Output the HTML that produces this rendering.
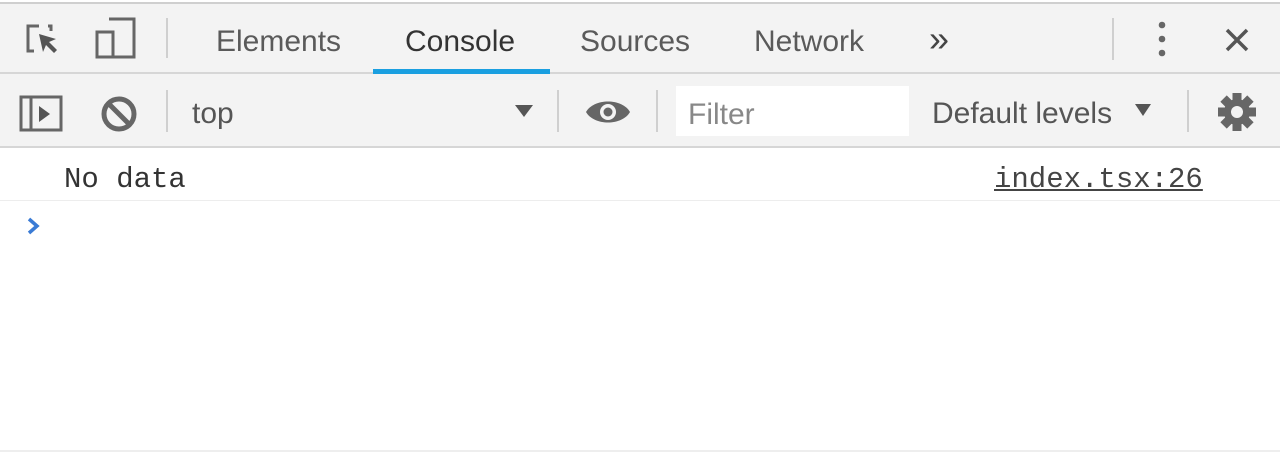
<!DOCTYPE html>
<html><head><style>
body{margin:0;width:1280px;height:452px;background:#fff;position:relative;overflow:hidden;font-family:"Liberation Sans",sans-serif;}
.a{position:absolute;white-space:nowrap;}
.bar1{position:absolute;left:0;top:2px;width:1280px;height:72px;background:#f3f3f3;border-top:2px solid #cfcfcf;border-bottom:2px solid #d6d6d6;box-sizing:border-box;}
.bar2{position:absolute;left:0;top:74px;width:1280px;height:74px;background:#f3f3f3;border-bottom:2px solid #d6d6d6;box-sizing:border-box;}
.tab{font-size:30px;color:#5a5a5a;top:25px;}
.sep{position:absolute;width:2px;background:#cfcfcf;}
.mono{font-family:"Liberation Mono",monospace;font-size:29px;color:#333;}
</style></head><body>
<div class="bar1"></div>
<div class="bar2"></div>
<svg class="a" style="left:24px;top:22px" width="40" height="36" viewBox="0 0 40 36"><path d="M15 4H4v25h6" fill="none" stroke="#666" stroke-width="3"/><path d="M24 4h3v5" fill="none" stroke="#666" stroke-width="3"/><path d="M15 12l17 5-7 3 8 8-3 3-8-8-3 7z" fill="#555"/></svg>
<svg class="a" style="left:93px;top:16px" width="46" height="44" viewBox="0 0 46 44"><path d="M16 3h25v38H16" fill="none" stroke="#666" stroke-width="3"/><rect x="4" y="16" width="16" height="25" fill="none" stroke="#666" stroke-width="3"/></svg>
<div class="sep" style="left:166px;top:18px;height:40px"></div>
<div class="a tab" style="left:216px">Elements</div>
<div class="a tab" style="left:405px;color:#333">Console</div>
<div class="a" style="left:373px;top:69px;width:177px;height:5px;background:#1a9fe0"></div>
<div class="a tab" style="left:580px">Sources</div>
<div class="a tab" style="left:754px">Network</div>
<div class="a" style="left:929px;top:18px;font-size:36px;color:#444">»</div>
<div class="sep" style="left:1112px;top:18px;height:42px"></div>
<svg class="a" style="left:1155px;top:20px" width="14" height="38"><circle cx="7" cy="5" r="3.3" fill="#666"/><circle cx="7" cy="19" r="3.3" fill="#666"/><circle cx="7" cy="33" r="3.3" fill="#666"/></svg>
<svg class="a" style="left:1224px;top:27px" width="26" height="26"><path d="M3 3L23 23M23 3L3 23" stroke="#555" stroke-width="3.5"/></svg>
<svg class="a" style="left:18px;top:94px" width="46" height="40"><rect x="3" y="3" width="40" height="33" fill="none" stroke="#666" stroke-width="3"/><path d="M13 3v33" stroke="#666" stroke-width="3"/><path d="M21 12l11 8-11 8z" fill="#555"/></svg>
<svg class="a" style="left:99px;top:94px" width="40" height="40"><circle cx="20" cy="20" r="15" fill="none" stroke="#666" stroke-width="5"/><path d="M10 10L30 30" stroke="#666" stroke-width="5"/></svg>
<div class="sep" style="left:166px;top:90px;height:42px"></div>
<div class="a" style="left:192px;top:97px;font-size:30px;color:#555">top</div>
<svg class="a" style="left:514px;top:104px" width="20" height="14"><path d="M1 1h18L10 13z" fill="#555"/></svg>
<div class="sep" style="left:557px;top:90px;height:42px"></div>
<svg class="a" style="left:584px;top:96px" width="48" height="32" viewBox="0 0 48 32"><path d="M2 16C10 2 38 2 46 16C38 30 10 30 2 16z" fill="#666"/><circle cx="24" cy="16" r="8" fill="#f3f3f3"/><circle cx="24" cy="16" r="4.5" fill="#666"/></svg>
<div class="sep" style="left:656px;top:90px;height:42px"></div>
<div class="a" style="left:676px;top:86px;width:233px;height:50px;background:#fff"></div>
<div class="a" style="left:688px;top:98px;font-size:30px;color:#888">Filter</div>
<div class="a" style="left:932px;top:97px;font-size:30px;color:#555">Default levels</div>
<svg class="a" style="left:1134px;top:103px" width="18" height="14"><path d="M1 1h16L9 13z" fill="#555"/></svg>
<div class="sep" style="left:1187px;top:90px;height:42px"></div>
<svg class="a" style="left:1217px;top:92px" width="40" height="40" viewBox="-20 -20 40 40"><g fill="#666"><circle r="13"/><g id="t"><rect x="-4.5" y="-19" width="9" height="9"/></g><use href="#t" transform="rotate(45)"/><use href="#t" transform="rotate(90)"/><use href="#t" transform="rotate(135)"/><use href="#t" transform="rotate(180)"/><use href="#t" transform="rotate(225)"/><use href="#t" transform="rotate(270)"/><use href="#t" transform="rotate(315)"/></g><circle r="6" fill="#f3f3f3"/></svg>
<div class="a mono" style="left:64px;top:163px">No data</div>
<div class="a mono" style="left:994px;top:163px;text-decoration:underline;color:#444">index.tsx:26</div>
<div class="a" style="left:0;top:200px;width:1280px;height:1px;background:#ededed"></div>
<svg class="a" style="left:25px;top:216px" width="16" height="20"><path d="M4 3l8 7-8 7" fill="none" stroke="#3a7bd5" stroke-width="3.5"/></svg>
<div class="a" style="left:0;top:450px;width:1280px;height:2px;background:#eee"></div>
</body></html>
